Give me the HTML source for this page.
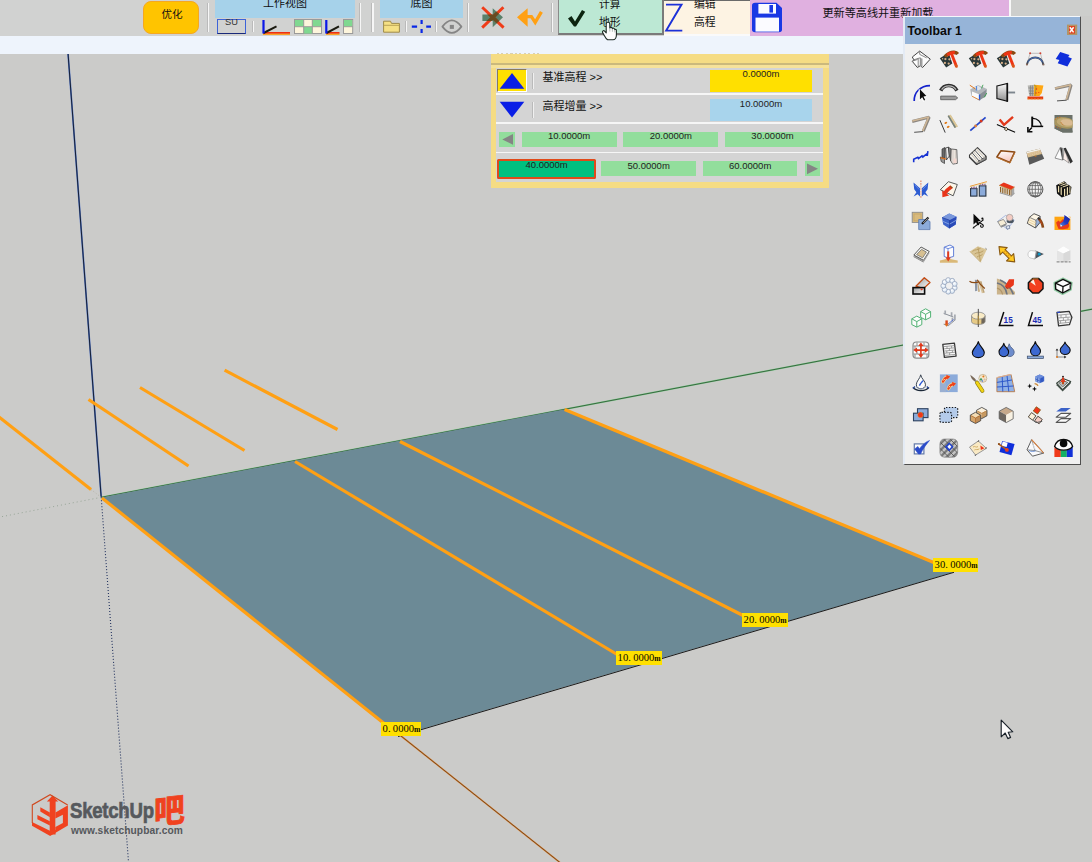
<!DOCTYPE html>
<html><head><meta charset="utf-8">
<style>
html,body{margin:0;padding:0;}
body{width:1092px;height:862px;overflow:hidden;background:#cbcbc9;position:relative;font-family:"Liberation Sans","Noto Sans CJK SC",sans-serif;}
.abs{position:absolute;}
#scene{position:absolute;left:0;top:0;width:1092px;height:862px;}
#topbar{position:absolute;left:0;top:0;width:1092px;height:36px;background:#d1d2d1;overflow:hidden;}
#band{position:absolute;left:0;top:36px;width:1081px;height:18px;background:#eef4fc;}
.sep{position:absolute;width:1.2px;background:#f6f6f6;box-shadow:-1px 0 0 #bababa;}
.hdr{position:absolute;top:0;height:17.5px;background:#a6d2ea;}
.cjk{font-family:"Liberation Sans","Noto Sans CJK SC",sans-serif;color:#111;white-space:nowrap;}
.t11{font-size:11px;line-height:11px;}
.lab{position:absolute;background:#ffe000;font-family:"Liberation Serif","Noto Serif CJK SC",serif;font-size:10.6px;line-height:11px;color:#0c0c00;white-space:nowrap;}
.lab span{position:absolute;left:1.6px;top:0.6px;}.lab i{font-style:normal;letter-spacing:2.3px;}.lab b{font-size:7.6px;letter-spacing:0;}
.fld{position:absolute;font-size:9.5px;line-height:10px;text-align:center;color:#222;}
</style></head><body>
<!-- SCENE -->
<svg id="scene" width="1092" height="862" viewBox="0 0 1092 862">
<line x1="101.2" y1="497.3" x2="1092" y2="309.2" stroke="#86cf92" stroke-width="1.7"/><line x1="101.2" y1="497.3" x2="1092" y2="309.2" stroke="#2a5532" stroke-width="0.85"/>
<polygon points="101.5,497.5 564.3,409.4 954,572 398,736" fill="#6c8a96"/>
<line x1="398" y1="736.5" x2="954" y2="572.3" stroke="#1a1a1a" stroke-width="1"/>

<line x1="68" y1="53" x2="101.2" y2="497.3" stroke="#4f72c6" stroke-width="1.7"/><line x1="68" y1="53" x2="101.2" y2="497.3" stroke="#0e1624" stroke-width="0.9"/>
<line x1="101.2" y1="497.3" x2="128.5" y2="862" stroke="#22325e" stroke-width="1.1" stroke-dasharray="1 2"/>
<line x1="101.2" y1="497.3" x2="0" y2="517" stroke="#98a698" stroke-width="1" stroke-dasharray="1 3"/>
<line x1="91" y1="489.5" x2="101.2" y2="497.3" stroke="#b8b4a8" stroke-width="1" stroke-dasharray="1 2"/>
<line x1="400.4" y1="735.5" x2="559.8" y2="862.4" stroke="#e08a3a" stroke-width="1.6"/><line x1="400.4" y1="735.5" x2="559.8" y2="862.4" stroke="#5e3a1c" stroke-width="0.8"/>
<g stroke="#ffa014" stroke-width="3.2" stroke-linecap="butt">
<line x1="-1" y1="417" x2="91" y2="489.5"/>
<line x1="102" y1="498" x2="386" y2="725"/>
<line x1="88.5" y1="399.5" x2="188.5" y2="466"/>
<line x1="295" y1="461.5" x2="618" y2="655"/>
<line x1="140" y1="387.5" x2="244.5" y2="450.5"/>
<line x1="400" y1="441.5" x2="744" y2="616"/>
<line x1="224.6" y1="370.2" x2="337.5" y2="429.5"/>
<line x1="564.6" y1="409.6" x2="935" y2="563"/>
</g>
</svg>
<div class="lab" style="left:381px;top:722px;width:40px;height:14px;"><span>0<i>.</i>0000<b>m</b></span></div>
<div class="lab" style="left:616px;top:651px;width:46px;height:14px;"><span>10<i>.</i>0000<b>m</b></span></div>
<div class="lab" style="left:742px;top:613px;width:46px;height:14px;"><span>20<i>.</i>0000<b>m</b></span></div>
<div class="lab" style="left:933px;top:558px;width:45px;height:14px;"><span>30<i>.</i>0000<b>m</b></span></div>

<!-- TOP BAR -->
<div id="topbar">
<!-- optimise button -->
<div class="abs" style="left:143.2px;top:1px;width:53.8px;height:31px;border:1.5px solid #f5a820;border-radius:8px;background:#ffc400;"></div>
<div class="abs cjk" style="left:143px;top:7.5px;width:58px;text-align:center;font-size:10.6px;line-height:12px;">优化</div>
<div class="sep" style="left:208px;top:3px;height:29px;"></div>
<!-- work view -->
<div class="hdr" style="left:215px;width:140px;"></div>
<div class="abs cjk" style="left:215px;top:-3px;width:140px;text-align:center;font-size:11px;line-height:13px;">工作视图</div>
<div class="abs" style="left:217px;top:19px;width:27px;height:13px;border:1px solid #3d63d8;border-bottom:1.5px solid #1a2a7a;"></div>
<div class="abs" style="left:217px;top:17.6px;width:29px;text-align:center;font-size:9.3px;line-height:9px;color:#333;">SU</div>
<div class="sep" style="left:253px;top:21px;height:11px;"></div>
<svg class="abs" style="left:258px;top:17px;" width="100" height="19" viewBox="258 17 100 19">
 <rect x="263" y="33.3" width="27" height="1.6" fill="#ffa014"/>
 <rect x="263" y="32" width="27" height="1.6" fill="#f03010"/>
 <line x1="263.5" y1="33" x2="276.5" y2="26.3" stroke="#1a1a10" stroke-width="2"/>
 <rect x="262.4" y="20" width="2.2" height="13.5" fill="#0a18e8"/>
 <g>
  <rect x="294.5" y="19.5" width="27" height="14" fill="#fdf5dc" stroke="#9a9a9a" stroke-width="1"/>
  <rect x="295" y="20" width="8.7" height="6.5" fill="#80d890"/>
  <rect x="312.3" y="20" width="8.7" height="6.5" fill="#80d890"/>
  <rect x="303.7" y="27" width="8.6" height="6.5" fill="#80d890"/>
  <path d="M303.7 19.5V33.5M312.3 19.5V33.5M294.5 26.7H321.5" stroke="#9a9c98" stroke-width="1" fill="none"/>
 </g>
 <rect x="326" y="33.3" width="13.5" height="1.6" fill="#ffa014"/>
 <rect x="326" y="32" width="13.5" height="1.6" fill="#f03010"/>
 <line x1="326.5" y1="33" x2="339" y2="26.3" stroke="#1a1a10" stroke-width="2"/>
 <rect x="325.2" y="20" width="2.2" height="13.5" fill="#0a18e8"/>
 <rect x="343.5" y="19.5" width="9.2" height="14" fill="#fdf5dc" stroke="#9a9a9a" stroke-width="1"/>
 <rect x="344" y="20" width="8.2" height="6.5" fill="#80d890"/>
 <path d="M343.5 26.7H352.7" stroke="#9a9c98" stroke-width="1"/>
</svg>
<div class="sep" style="left:360px;top:3px;height:29px;"></div>
<div class="sep" style="left:372.4px;top:3px;height:29px;"></div>
<!-- base map -->
<div class="hdr" style="left:380px;width:83px;"></div>
<div class="abs cjk" style="left:380px;top:-3px;width:83px;text-align:center;font-size:11px;line-height:13px;">底图</div>
<svg class="abs" style="left:380px;top:17px;" width="86" height="19" viewBox="380 17 86 19">
 <path d="M383.6 21.2H390.5L391.5 23.4H399.4V32.2H383.6Z" fill="#f5e084" stroke="#9e8a48" stroke-width="1"/>
 <path d="M383.6 25.3H399.4" stroke="#b49c50" stroke-width="0.9"/>
 <g stroke="#0a28e6" stroke-width="2.2">
  <path d="M411.8 26.6H417.1M426.2 26.6H431M421.6 20V24.1M421.6 29.1V33.1"/>
 </g>
 <path d="M442.4 26.6C445.5 22.6 449 20.4 451.8 20.4S458.4 22.6 461.4 26.6C458.4 30.6 455 32.8 451.8 32.8S445.5 30.6 442.4 26.6Z" fill="none" stroke="#858585" stroke-width="1.8" stroke-linejoin="round"/>
 <rect x="449.8" y="24.9" width="4.1" height="4" fill="#858585"/>
</svg>
<div class="sep" style="left:406px;top:21px;height:11px;"></div>
<div class="sep" style="left:436px;top:21px;height:11px;"></div>
<div class="sep" style="left:468px;top:3px;height:29px;"></div>
<!-- X icon & arrow icon -->
<svg class="abs" style="left:476px;top:0px;" width="74" height="36" viewBox="476 0 74 36">
 <defs><clipPath id="garr"><path d="M482.4 14.4H492.7V8.2L503 17.3L492.7 27.2V21H482.4Z"/></clipPath></defs>
 <path d="M482.4 14.4H492.7V8.2L503 17.3L492.7 27.2V21H482.4Z" fill="#5a806a"/>
 <path d="M482.2 7.2L503.6 27.6M503.4 7.2L482.2 27.6" stroke="#f03c18" stroke-width="2.9" fill="none"/>
 <g clip-path="url(#garr)"><path d="M482.2 7.2L503.6 27.6M503.4 7.2L482.2 27.6" stroke="#6a4a20" stroke-width="3.6" fill="none"/></g>
 <path d="M517 17.3L527.6 8.2V26.8Z" fill="#ffa014"/>
 <path d="M526 16.6H531.4L535.2 22.4L541.4 11.8" fill="none" stroke="#ffa014" stroke-width="3.3" stroke-linejoin="miter" stroke-miterlimit="2"/>
</svg>
<div class="sep" style="left:552px;top:3px;height:29px;"></div>
<!-- green button -->
<div class="abs" style="left:558px;top:-2px;width:103px;height:35px;background:#bce8d4;border-left:1.5px solid #8a8a8a;border-right:2px solid #7a7a7a;border-bottom:2px solid #7a7a7a;"></div>
<svg class="abs" style="left:565px;top:8px;" width="24" height="22" viewBox="565 8 24 22">
 <path d="M568 18.5L571.5 16L575 21.5L582 10L585.2 11.8L576 26.5H574Z" fill="#0c2410"/>
</svg>
<div class="abs cjk" style="left:599px;top:-2.5px;font-size:10.8px;line-height:13px;">计算</div>
<div class="abs cjk" style="left:599px;top:16px;font-size:10.8px;line-height:13px;">地形</div>
<!-- cream button -->
<div class="abs" style="left:664px;top:0;width:86px;height:36px;background:#fdf3e3;border-top:1.5px solid #6a6a6a;border-bottom:2.2px solid #fafafa;box-sizing:border-box;"></div>
<svg class="abs" style="left:664px;top:2px;" width="22" height="32" viewBox="664 2 22 32">
 <path d="M666 4.6H681.5L666.2 30.6H682.3" fill="none" stroke="#1c30d8" stroke-width="1.9"/>
</svg>
<div class="abs cjk" style="left:694px;top:-2.5px;font-size:10.8px;line-height:13px;">编辑</div>
<div class="abs cjk" style="left:694px;top:16px;font-size:10.8px;line-height:13px;">高程</div>
<!-- pink -->
<div class="abs" style="left:750px;top:0;width:259px;height:36px;background:#e0b0e0;"></div>
<div class="abs" style="left:1009px;top:0;width:83px;height:36px;background:#cdcecc;"></div><div class="abs" style="left:1081px;top:16px;width:11px;height:20px;background:#cbcbc9;"></div><div class="abs" style="left:1009px;top:0;width:1.5px;height:17px;background:#f8f8f8;"></div>
<svg class="abs" style="left:750px;top:0px;" width="36" height="36" viewBox="750 0 36 36">
 <path d="M752 5.6Q752 2.8 755 2.8H776.5L782 8V29.5Q782 32.2 779 32.2H755Q752 32.2 752 29.5Z" fill="#1a38e4"/>
 <rect x="758.4" y="4" width="17.6" height="9.6" fill="#fbfbff"/>
 <rect x="769.4" y="5" width="3.6" height="7.6" fill="#1a38e4"/>
 <rect x="755.5" y="17.6" width="23.5" height="14" fill="#fbfbff"/>
</svg>
<div class="abs cjk" style="left:822.5px;top:7px;font-size:11.1px;line-height:12px;">更新等高线并重新加载</div>
</div>
<div id="band"></div>
<!-- YELLOW PANEL -->
<div class="abs" style="left:491px;top:53.5px;width:338px;height:134px;background:#f5dc84;"></div>
<div class="abs" style="left:491px;top:62.8px;width:338px;height:2.2px;background:#cbb97c;"></div><div class="abs" style="left:491px;top:65px;width:338px;height:2.6px;background:#f6e29a;"></div>
<div class="abs" style="left:496px;top:67.5px;width:327px;height:114.5px;background:#d4d4d4;"></div>
<div class="abs" style="left:496px;top:93.3px;width:327px;height:1.7px;background:#f6f6f6;"></div>
<div class="abs" style="left:496px;top:122px;width:327px;height:1.7px;background:#f6f6f6;"></div>
<div class="abs" style="left:496px;top:151.5px;width:327px;height:1.7px;background:#f6f6f6;"></div>
<div class="abs" style="left:497px;top:53.4px;width:44px;height:1px;background:repeating-linear-gradient(90deg,#cdbf94 0 2px,transparent 2px 4.5px);opacity:0.7;"></div>
<!-- row1 -->
<div class="abs" style="left:497px;top:69px;width:28px;height:21px;background:#ffe000;border-top:1.5px solid #8a7a5a;border-left:1.5px solid #8a7a5a;border-right:1.5px solid #fff;border-bottom:1.5px solid #fff;"></div>
<svg class="abs" style="left:497px;top:69px;" width="31" height="51" viewBox="497 69 31 51">
 <path d="M512 73L524.3 88.8H499.7Z" fill="#0a1ee6"/>
 <path d="M512 117.6L524.3 101.8H499.7Z" fill="#0a1ee6"/>
</svg>
<div class="sep" style="left:533px;top:73px;height:16px;background:#f0f0f0;"></div>
<div class="sep" style="left:533px;top:102px;height:16px;background:#f0f0f0;"></div>
<div class="abs cjk" style="left:542.5px;top:70.7px;font-size:11px;line-height:12px;">基准高程 &gt;&gt;</div>
<div class="abs cjk" style="left:542.5px;top:100.1px;font-size:11px;line-height:12px;">高程增量 &gt;&gt;</div>
<div class="fld" style="left:710px;top:69.7px;width:102px;height:22px;background:#ffe000;"><div style="margin-top:-0.7px">0.0000m</div></div>
<div class="fld" style="left:710px;top:98.7px;width:102px;height:22px;background:#a8d4ec;"><div style="margin-top:0.8px">10.0000m</div></div>
<!-- row3 -->
<div class="fld" style="left:499px;top:131.8px;width:16px;height:15.4px;background:#92de9c;"></div>
<div class="fld" style="left:521.6px;top:131.8px;width:95px;height:15.4px;background:#92de9c;"><div style="margin-top:-0.7px">10.0000m</div></div>
<div class="fld" style="left:623.4px;top:131.8px;width:95px;height:15.4px;background:#92de9c;"><div style="margin-top:-0.7px">20.0000m</div></div>
<div class="fld" style="left:725px;top:131.8px;width:95px;height:15.4px;background:#92de9c;"><div style="margin-top:-0.7px">30.0000m</div></div>
<!-- row4 -->
<div class="fld" style="left:497.4px;top:159px;width:98.4px;height:19.5px;background:#00c080;border:2px solid #e04a1a;box-sizing:border-box;border-radius:1.5px;"><div style="margin-top:-0.6px">40.0000m</div></div>
<div class="fld" style="left:601.2px;top:161.2px;width:95px;height:15.2px;background:#92de9c;"><div style="margin-top:-0.5px">50.0000m</div></div>
<div class="fld" style="left:703.2px;top:161.2px;width:94px;height:15.2px;background:#92de9c;"><div style="margin-top:-0.5px">60.0000m</div></div>
<div class="fld" style="left:804.8px;top:161.2px;width:15px;height:15.2px;background:#92de9c;"></div>
<svg class="abs" style="left:497px;top:130px;" width="326" height="50" viewBox="497 130 326 50">
 <path d="M502.3 139.4L513 134V144.8Z" fill="#858585"/>
 <path d="M818 168.8L807 163.4V174.2Z" fill="#858585"/>
</svg>
<!-- TOOLBAR PANEL -->
<div id="tb1" class="abs" style="left:903px;top:16px;width:178px;height:449px;background:#f0f0f0;box-sizing:border-box;border-left:2px solid #e4ebf5;border-top:1.4px solid #f4f7fb;border-right:1.3px solid #4e4e4e;border-bottom:1.3px solid #4e4e4e;"></div>
<div class="abs" style="left:905px;top:17.4px;width:175px;height:26.4px;background:#96b4d8;"></div>
<div class="abs" style="left:907.5px;top:24px;font-size:12.3px;line-height:14px;font-weight:bold;color:#0a0a0a;white-space:nowrap;letter-spacing:0px;">Toolbar 1</div>
<svg class="abs" style="left:1066px;top:23px;" width="13" height="13" viewBox="0 0 13 13"><rect x="1" y="1.6" width="10.2" height="10.4" fill="#b29466"/><rect x="3" y="3" width="6" height="7.6" fill="#e2401c"/><path d="M3.8 4.2L7.6 9.4M7.6 4.2L3.8 9.4" stroke="#fdfdfd" stroke-width="1.5"/></svg>
<svg class="abs" style="left:908.8px;top:47.0px;" width="24" height="24" viewBox="0 0 24 24"><path d="M10.7 4.1L21.3 12.1L13.6 20.5L11.3 18.7L8.4 20.5L3.3 14.4L4.8 12.8L3.3 10Z" fill="#fdfdfd" stroke="#444" stroke-width="1" stroke-linejoin="round"/>
<path d="M11.3 10.8L12.9 11.5V19.6L11.3 18.7Z" fill="#cfcfcf"/>
<path d="M4.8 12.8L9.2 11.4L11.3 10.8M9.2 11.4V19.8M11.3 10.8V18.7M12.9 11.5V19.6M10.7 4.3V7.4L17.7 10.9M3.6 14.2L8.6 12.4" stroke="#6a6a6a" stroke-width="0.8" fill="none"/></svg>
<svg class="abs" style="left:937.3px;top:47.0px;" width="24" height="24" viewBox="0 0 24 24"><path d="M2.8 11.3L11.7 5.7L15.3 16.4L9.2 20.5Z" fill="#2a3838"/>
<g fill="#d9b08a"><circle cx="8.4" cy="12.1" r="1.15"/><circle cx="12.4" cy="12.3" r="1.15"/><circle cx="7.9" cy="15.9" r="1.1"/><circle cx="11.7" cy="16.6" r="1.1"/><circle cx="10.2" cy="9" r="0.8"/><circle cx="5.6" cy="11.8" r="0.7"/></g>
<path d="M7.8 9.6C10.5 7 14.5 5 17 5.2C18.6 5.4 20 6 20.8 7" fill="none" stroke="#8a4a12" stroke-width="3.4"/>
<path d="M10.2 8C12.5 6.2 15 5.4 17.8 5.8" fill="none" stroke="#ee3514" stroke-width="3.2"/>
<path d="M14.6 7L19.6 19.8" stroke="#ee3514" stroke-width="2.9"/>
<path d="M18.6 17.4L19.9 20.6" stroke="#d8581a" stroke-width="2.2"/></svg>
<svg class="abs" style="left:965.8px;top:47.0px;" width="24" height="24" viewBox="0 0 24 24"><path d="M2.8 11.3L11.7 5.7L15.3 16.4L9.2 20.5Z" fill="#2a3838"/>
<g fill="#d9b08a"><circle cx="8.4" cy="12.1" r="1.15"/><circle cx="12.4" cy="12.3" r="1.15"/><circle cx="7.9" cy="15.9" r="1.1"/><circle cx="11.7" cy="16.6" r="1.1"/><circle cx="10.2" cy="9" r="0.8"/><circle cx="5.6" cy="11.8" r="0.7"/></g>
<path d="M7.8 9.6C10.5 7 14.5 5 17 5.2C18.6 5.4 20 6 20.8 7" fill="none" stroke="#8a4a12" stroke-width="3.4"/>
<path d="M10.2 8C12.5 6.2 15 5.4 17.8 5.8" fill="none" stroke="#ee3514" stroke-width="3.2"/>
<path d="M14.6 7L19.6 19.8" stroke="#ee3514" stroke-width="2.9"/>
<path d="M18.6 17.4L19.9 20.6" stroke="#d8581a" stroke-width="2.2"/></svg>
<svg class="abs" style="left:994.3px;top:47.0px;" width="24" height="24" viewBox="0 0 24 24"><path d="M2.8 11.3L11.7 5.7L15.3 16.4L9.2 20.5Z" fill="#2a3838"/>
<g fill="#d9b08a"><circle cx="8.4" cy="12.1" r="1.15"/><circle cx="12.4" cy="12.3" r="1.15"/><circle cx="7.9" cy="15.9" r="1.1"/><circle cx="11.7" cy="16.6" r="1.1"/><circle cx="10.2" cy="9" r="0.8"/><circle cx="5.6" cy="11.8" r="0.7"/></g>
<path d="M7.8 9.6C10.5 7 14.5 5 17 5.2C18.6 5.4 20 6 20.8 7" fill="none" stroke="#8a4a12" stroke-width="3.4"/>
<path d="M10.2 8C12.5 6.2 15 5.4 17.8 5.8" fill="none" stroke="#ee3514" stroke-width="3.2"/>
<path d="M14.6 7L19.6 19.8" stroke="#ee3514" stroke-width="2.9"/>
<path d="M18.6 17.4L19.9 20.6" stroke="#d8581a" stroke-width="2.2"/></svg>
<svg class="abs" style="left:1022.8px;top:47.0px;" width="24" height="24" viewBox="0 0 24 24"><path d="M3.8 17.5L7.1 6.3H17.4L20.4 17.5" fill="none" stroke="#b9b9b9" stroke-width="0.9"/>
<path d="M3.8 17.8C5.5 8 19 8 20.4 17.8" fill="none" stroke="#39485e" stroke-width="1.9"/>
<path d="M5 15C7.5 9 17 9 19.3 15" fill="none" stroke="#4a78d8" stroke-width="0.7"/>
<circle cx="7.1" cy="6.3" r="1" fill="#d04030"/><circle cx="17.4" cy="6.3" r="1" fill="#d04030"/>
<rect x="3" y="16.6" width="1.8" height="1.8" fill="#8a6a5a"/><rect x="19.5" y="16.6" width="1.8" height="1.8" fill="#8a6a5a"/></svg>
<svg class="abs" style="left:1051.3px;top:47.0px;" width="24" height="24" viewBox="0 0 24 24"><path d="M9.2 5L18.5 7.9L17.2 9.9L20.9 11.5L16.4 19.6L6.7 16.3L8.4 13.1L4.7 11.9Z" fill="#0f2edb"/></svg>
<svg class="abs" style="left:908.8px;top:79.5px;" width="24" height="24" viewBox="0 0 24 24"><path d="M5.2 21C5 12 11.5 5.8 21 5.6" fill="none" stroke="#1422cc" stroke-width="1.7"/>
<path d="M10.2 9.5V20.5L12.6 18.3L14.4 21.3L16 20.4L14.4 17.4L17.3 16.8Z" fill="#fff" stroke="#fff" stroke-width="1"/>
<path d="M10.9 9.2V19.6L13.2 17.2L15 20.6L16.2 20L14.5 16.6L17.4 16Z" fill="#0a0a0a"/></svg>
<svg class="abs" style="left:937.3px;top:79.5px;" width="24" height="24" viewBox="0 0 24 24"><path d="M3.7 10.6C7 3.8 16.5 3.8 19.9 10.6" fill="none" stroke="#2e2e2e" stroke-width="3.6"/>
<path d="M4.6 9.6C8 4.6 15.6 4.6 19 9.6" fill="none" stroke="#b8b8b8" stroke-width="1.2"/>
<path d="M3.7 16.1H18.5L20.7 17.9L18.5 19.7H3.7Z" fill="#9c9c9c" stroke="#555" stroke-width="0.8"/></svg>
<svg class="abs" style="left:965.8px;top:79.5px;" width="24" height="24" viewBox="0 0 24 24"><path d="M4.2 9.5L12 5L21 9L20 16L13 20.5L5.5 16Z" fill="#b4b8bc"/>
<path d="M6 11.5L13.5 14.5V20L6 16.2Z" fill="#fbfbfb"/>
<path d="M13.5 14.5L20.5 9.5L20 16L13.5 20.2Z" fill="#8a9096"/>
<path d="M8 7.5L12 5.5L16 8.5L12 10.5Z" fill="#dfe4ea"/>
<path d="M13.5 14.5V20.3" stroke="#2a58d0" stroke-width="1.3"/>
<path d="M10.5 6V10.5" stroke="#5a8ad8" stroke-width="1.2"/>
<path d="M3.8 5.2L9.5 9" stroke="#e07820" stroke-width="1"/>
<path d="M17 4.8L15.5 8.5M20.8 13L18 17.5" stroke="#3aa050" stroke-width="0.9"/>
<path d="M6 16.2L13.5 20" stroke="#e07820" stroke-width="0.8"/></svg>
<svg class="abs" style="left:994.3px;top:79.5px;" width="24" height="24" viewBox="0 0 24 24"><defs><linearGradient id="g13_24" x1="0" y1="0" x2="0" y2="1"><stop offset="0" stop-color="#fafafa"/><stop offset="1" stop-color="#8e8e8e"/></linearGradient></defs>
<path d="M2.9 6L13.4 3.5V21.3L2.9 18.5Z" fill="url(#g13_24)" stroke="#111" stroke-width="1.1"/>
<path d="M13.3 3.2V21.6" stroke="#111" stroke-width="1.7"/>
<path d="M14 12.5H21.1" stroke="#7d868e" stroke-width="1.9"/></svg>
<svg class="abs" style="left:1022.8px;top:79.5px;" width="24" height="24" viewBox="0 0 24 24"><path d="M4.7 5.5L11.4 4.8L11 16.1H6.2Z" fill="#b6b6b2"/>
<path d="M5.5 8H10.8M5.8 11H10.8M6 13.5H10.8M7.5 5.5V16M9.4 5.5V16" stroke="#7e7e7e" stroke-width="0.7"/>
<path d="M11.2 4.8L20.4 5.6L18.8 13L16.5 16.1H10.8Z" fill="#ffa713"/>
<path d="M11.2 5L13 6.5L12 16" stroke="#b89a28" stroke-width="1.2" fill="none"/>
<circle cx="13.5" cy="9" r="0.7" fill="#e83010"/><circle cx="13" cy="13" r="0.7" fill="#e83010"/><circle cx="15.8" cy="12.5" r="0.6" fill="#e83010"/>
<path d="M4.5 16.5H20.2V19.3H4.5Z" fill="#e23a12"/>
<path d="M4.5 19H20.2" stroke="#ff9a20" stroke-width="0.8" stroke-dasharray="2 1.2"/></svg>
<svg class="abs" style="left:1051.3px;top:79.5px;" width="24" height="24" viewBox="0 0 24 24"><path d="M4 8.6L20.1 5L15.9 19.8" fill="none" stroke="#8b8680" stroke-width="3" stroke-linejoin="bevel"/>
<path d="M4 8.2L19.6 4.8L15.3 19.6" fill="none" stroke="#cdb595" stroke-width="1.5" stroke-linejoin="bevel"/>
<path d="M15.7 20.2L6 20.9" fill="none" stroke="#3d3d3d" stroke-width="0.9"/></svg>
<svg class="abs" style="left:908.8px;top:112.0px;" width="24" height="24" viewBox="0 0 24 24"><path d="M3.2 9.5L20.2 5.1L14.3 19.2" fill="none" stroke="#8b8680" stroke-width="3" stroke-linejoin="bevel"/>
<path d="M3.2 9.1L19.7 4.9L13.7 19" fill="none" stroke="#cdb595" stroke-width="1.5" stroke-linejoin="bevel"/>
<path d="M14.1 19.6L5.2 20.3" fill="none" stroke="#3d3d3d" stroke-width="0.9"/></svg>
<svg class="abs" style="left:937.3px;top:112.0px;" width="24" height="24" viewBox="0 0 24 24"><path d="M2.9 8.1L8.2 20.6" stroke="#222" stroke-width="0.9"/>
<path d="M10.6 3.9L13.6 2.8L20.8 14.4L17.6 15.9Z" fill="#cbb586"/>
<path d="M10.6 3.9L12 3.3L19 15.2L17.6 15.9Z" fill="#74827f"/>
<path d="M12 3.3L13.6 2.8L20.8 14.4L19.4 15Z" fill="#dcc898"/>
<ellipse cx="8.8" cy="10.9" rx="1.5" ry="0.9" fill="#e07a18" transform="rotate(-25 8.8 10.9)"/>
<ellipse cx="11.2" cy="14.9" rx="1.5" ry="0.9" fill="#e07a18" transform="rotate(-25 11.2 14.9)"/></svg>
<svg class="abs" style="left:965.8px;top:112.0px;" width="24" height="24" viewBox="0 0 24 24"><path d="M4.3 18.6L19.6 5.3" stroke="#2446c9" stroke-width="1.7"/>
<circle cx="15.1" cy="9" r="1.5" fill="#d8381c"/><circle cx="9.6" cy="14" r="1.4" fill="#e0803a"/></svg>
<svg class="abs" style="left:994.3px;top:112.0px;" width="24" height="24" viewBox="0 0 24 24"><path d="M2.9 12.5L21.1 20.2" stroke="#0a0a0a" stroke-width="1.1"/>
<path d="M5.6 7.4L10 12.8L19 4.8" fill="none" stroke="#e2391a" stroke-width="2.4" stroke-linejoin="miter"/>
<path d="M12.2 15.3L14 17.1L12.2 18.9L10.4 17.1Z" fill="#f0d8a8" stroke="#111" stroke-width="0.8"/></svg>
<svg class="abs" style="left:1022.8px;top:112.0px;" width="24" height="24" viewBox="0 0 24 24"><path d="M9.2 4.6V14.4" stroke="#0a0a0a" stroke-width="1.9"/>
<path d="M8.3 14.4H20.2" stroke="#0a0a0a" stroke-width="1.5"/>
<path d="M10 6.4C14.6 6.6 18 9.8 18.3 14.2" fill="none" stroke="#0a0a0a" stroke-width="1.15"/>
<path d="M8.9 15.6L5.6 19" stroke="#0a0a0a" stroke-width="1.5"/>
<path d="M4.9 15V19.7H9.4" fill="none" stroke="#0a0a0a" stroke-width="1.6"/></svg>
<svg class="abs" style="left:1051.3px;top:112.0px;" width="24" height="24" viewBox="0 0 24 24"><defs><clipPath id="g25_36c"><path d="M3.5 3.1H21.5V20.6H11.7L3.5 16.5Z"/></clipPath></defs>
<g clip-path="url(#g25_36c)"><rect x="3" y="3" width="19" height="18" fill="#6b7169"/>
<ellipse cx="13.4" cy="10.8" rx="11.5" ry="5.6" fill="#a8955e" transform="rotate(9 13.4 10.8)"/>
<ellipse cx="14.6" cy="10.6" rx="9" ry="4.3" fill="#c1aa74" transform="rotate(9 14.6 10.6)"/>
<ellipse cx="16" cy="10.4" rx="6.2" ry="3.1" fill="#dabb93" transform="rotate(9 16 10.4)"/>
<path d="M4 7.6C6 5.6 8 5 9.6 5.2M4.2 14.4C6 15.4 8 16 10.4 16.6M10 10.4C10.8 12 12 13 13.6 13.6" fill="none" stroke="#c8681e" stroke-width="1" stroke-dasharray="1.1 1.3"/>
<path d="M3 15.4C8 18.6 15 19.6 22 18.6V21H3Z" fill="#6b7169"/></g></svg>
<svg class="abs" style="left:908.8px;top:144.3px;" width="24" height="24" viewBox="0 0 24 24"><path d="M4.7 18.2V15.2L8.8 13.3L9.5 14.6L13 11.9L13.8 13L17.4 10.2L18.4 10.9L18.9 7.2" fill="none" stroke="#1531d2" stroke-width="1.6" stroke-linejoin="miter" stroke-miterlimit="3"/></svg>
<svg class="abs" style="left:937.3px;top:144.3px;" width="24" height="24" viewBox="0 0 24 24"><path d="M5 5L8 3.5V14L5 16Z" fill="#6a6a6a" stroke="#333" stroke-width="0.7"/>
<path d="M8.6 4L11.4 3.2L12.4 12L9.4 16Z" fill="#e9e9e9" stroke="#333" stroke-width="0.8"/>
<path d="M11.4 3.2L14.2 5L13.8 17L12.4 12Z" fill="#8c8c8c" stroke="#333" stroke-width="0.7"/>
<path d="M14.2 5L19.8 5.6L20.3 19.4L15.8 20.1L13.8 17Z" fill="#f2ece6" stroke="#444" stroke-width="0.8"/>
<path d="M16 6V20M18.3 6V19.6" stroke="#c9c1ba" stroke-width="0.9"/>
<path d="M3.3 13L7.5 14.5V19.5L4.2 17.5Z" fill="#9a9a9a" stroke="#333" stroke-width="0.7"/>
<path d="M3.6 13.6L9 15.2" stroke="#d87020" stroke-width="1.2"/>
<path d="M16.5 14.5H19.5V19H16.5Z" fill="#f3d6cf"/></svg>
<svg class="abs" style="left:965.8px;top:144.3px;" width="24" height="24" viewBox="0 0 24 24"><path d="M3.5 11.2L11.5 3.6L20 12.2V15.4L10.6 20.5L3.5 13.4Z" fill="#fafafa" stroke="#3a3a3a" stroke-width="1.1" stroke-linejoin="round"/>
<path d="M6.2 8.8L13.6 17.6M8.8 6.2L16.6 15M3.8 12.6L10.8 19.6" stroke="#444" stroke-width="0.9"/>
<path d="M10.6 20.5L20 15.4V12.2L11.4 17.8Z" fill="#8d8d8d" stroke="#3a3a3a" stroke-width="0.7"/>
<path d="M5 10L12.2 18.6M7.6 7.6L15.2 16.4M10.2 5L18.4 13.6" stroke="#d9d2c4" stroke-width="1.3"/></svg>
<svg class="abs" style="left:994.3px;top:144.3px;" width="24" height="24" viewBox="0 0 24 24"><defs><linearGradient id="g33_44" x1="0" y1="0" x2="0.3" y2="1"><stop offset="0" stop-color="#ffffff"/><stop offset="1" stop-color="#f6c9c0"/></linearGradient></defs>
<path d="M7 6.8L20.7 8L15.8 18.5L2.9 12.9Z" fill="url(#g33_44)" stroke="#8a4812" stroke-width="1.6" stroke-linejoin="round"/>
<path d="M3.4 13.6L15.8 19.1L20.9 8.6" fill="none" stroke="#c27a38" stroke-width="0.8"/></svg>
<svg class="abs" style="left:1022.8px;top:144.3px;" width="24" height="24" viewBox="0 0 24 24"><g transform="translate(0 1.1)"><path d="M3.4 6.8L16.7 3.6L21.2 13.7L6.3 19.7Z" fill="#595959"/>
<path d="M3.4 6.8L16.7 3.6L19 8.8L5 12.4Z" fill="#d6bd8c"/>
<path d="M3.4 6.8L16.7 3.6L17.3 5L3.9 8.2Z" fill="#f4f1ec"/>
<path d="M4.2 9L17.8 5.8M4.6 10.6L18.4 7.2" stroke="#f0c8b8" stroke-width="0.6" stroke-dasharray="1.2 1"/>
<rect x="11.6" y="10.6" width="1.8" height="1" fill="#c8701e"/></g></svg>
<svg class="abs" style="left:1051.3px;top:144.3px;" width="24" height="24" viewBox="0 0 24 24"><path d="M9.2 3.6L4 14.1L11.6 16.1Z" fill="#fcfcfc" stroke="#6a6a6a" stroke-width="0.7"/>
<path d="M9.2 3.6L11.6 16.1L13.2 15.2L10.6 3.4Z" fill="#2f2f2f"/>
<path d="M13.4 4.6L12 14.8L18.2 19.2Z" fill="#f9ebe6" stroke="#6a6a6a" stroke-width="0.6"/>
<path d="M12.6 4.2L14.8 3.8L21.8 17.6L19.4 19.6Z" fill="#303030"/>
<path d="M10.8 3.6L12.6 4.2L12 14.8L11.6 16Z" fill="#8a8a8a"/></svg>
<svg class="abs" style="left:908.8px;top:176.6px;" width="24" height="24" viewBox="0 0 24 24"><path d="M4.5 5.5L11 11.2V19.6L8.6 17.2L4.6 19.4L7.4 15.2L5.2 12.2Z" fill="#2d5cd2"/>
<path d="M19.3 5.5L12.8 11.2V19.6L15.2 17.2L19.2 19.4L16.4 15.2L18.6 12.2Z" fill="#2d5cd2"/>
<path d="M6 8L10.2 12.5M17.8 8L13.6 12.5" stroke="#7a9ae8" stroke-width="0.7"/>
<path d="M11.9 3.5V21" stroke="#e0683a" stroke-width="0.9" stroke-dasharray="1.6 1"/>
<path d="M11.9 9V19" stroke="#f4f4f4" stroke-width="0.9" stroke-dasharray="1 1.6"/></svg>
<svg class="abs" style="left:937.3px;top:176.6px;" width="24" height="24" viewBox="0 0 24 24"><path d="M11.4 4.7L20.3 7.5L16.2 18.8L3.3 12.7Z" fill="#fbf6ea" stroke="#4a4a4a" stroke-width="0.9" stroke-linejoin="round"/>
<path d="M14.5 9.8C12 11.5 9.5 13.5 7.2 16.8" fill="none" stroke="#e8341a" stroke-width="3.6"/>
<path d="M5.2 13.4L5.4 20.2L12.2 18.6Z" fill="#e8341a"/>
<path d="M13.2 9.4L15.6 10.8" stroke="#8a4a12" stroke-width="1.2"/></svg>
<svg class="abs" style="left:965.8px;top:176.6px;" width="24" height="24" viewBox="0 0 24 24"><rect x="4.6" y="11.6" width="6.4" height="7.5" fill="#8cabda" stroke="#26313f" stroke-width="1.1"/>
<rect x="13.3" y="8.8" width="6.6" height="10.3" fill="#8cabda" stroke="#26313f" stroke-width="1.1"/>
<path d="M5.2 10.6H10.6M13.8 7.7H19.4" stroke="#d8b0e0" stroke-width="1.2"/>
<path d="M5.5 9.6V11M8 9.2V11M10.4 9.6V11M14.2 6.6V8.2M16.6 6V8.2M19 6.6V8.2" stroke="#333" stroke-width="0.6"/>
<path d="M3.9 9.4L20.8 4.7" stroke="#e8902a" stroke-width="1"/>
<path d="M3.9 10.1L20.8 5.4" stroke="#f0d8a0" stroke-width="0.6"/></svg>
<svg class="abs" style="left:994.3px;top:176.6px;" width="24" height="24" viewBox="0 0 24 24"><path d="M5.4 9.4L17.4 12.8V18.6L6.6 15.6Z" fill="#e6e0d2"/>
<path d="M6.6 10V15.5M8.8 10.6V16.2M11 11.2V16.8M13.2 11.8V17.4M15.4 12.4V18M17.2 12.8V18.5" stroke="#8a5a1e" stroke-width="1.1"/>
<path d="M17.4 12.8L20.2 10.4V15.6L17.4 18.6Z" fill="#a9a9a9"/>
<path d="M5.8 15.8L17.2 19.2L20.4 16" fill="none" stroke="#9a9a9a" stroke-width="1.1"/>
<path d="M5 8.3L9.8 5.5L20.7 9.9L17 12.9Z" fill="#e8351a"/>
<path d="M5 8.3L17 12.9L20.7 9.9" fill="none" stroke="#b88a38" stroke-width="0.7"/></svg>
<svg class="abs" style="left:1022.8px;top:176.6px;" width="24" height="24" viewBox="0 0 24 24"><circle cx="12.3" cy="12.3" r="7.6" fill="#f5f5f5" stroke="#5a5a5a" stroke-width="1"/>
<path d="M4.8 12.3H19.8M5.6 8.6H19M5.6 16H19M7.6 5.9H17M7.6 18.7H17" stroke="#5e5e5e" stroke-width="0.8"/>
<ellipse cx="12.3" cy="12.3" rx="3.2" ry="7.6" fill="none" stroke="#5e5e5e" stroke-width="0.8"/>
<ellipse cx="12.3" cy="12.3" rx="5.8" ry="7.6" fill="none" stroke="#5e5e5e" stroke-width="0.8"/>
<path d="M12.3 4.7V19.9" stroke="#5e5e5e" stroke-width="0.8"/></svg>
<svg class="abs" style="left:1051.3px;top:176.6px;" width="24" height="24" viewBox="0 0 24 24"><path d="M13.2 4.3L20.5 9.9L19.3 17.2L10.8 20.4L6 16.4L5.2 8.3Z" fill="#121212"/>
<path d="M7 9.3L8.2 8.7V15.8L7 15Z M9.6 10.6L10.8 10V18.2L9.6 17.4Z" fill="#efe0b2"/>
<path d="M13 12L14.2 11.4V19L13 19.4Z M15.8 10.6L17 10V17.6L15.8 18.2Z M18.4 9.6L19.4 9.2V16L18.4 16.6Z" fill="#efe0b2"/>
<path d="M8 7.2L13.4 5.4M9.6 8.6L15.4 6.6M11.6 10L17.4 8" stroke="#efe0b2" stroke-width="1"/>
<path d="M14.8 7.2L16.6 6L17.8 7.6Z" fill="#fff"/></svg>
<svg class="abs" style="left:908.8px;top:209.0px;" width="24" height="24" viewBox="0 0 24 24"><rect x="3.2" y="3.3" width="10.5" height="10.1" fill="#d9ba7c" stroke="#8a8a8a" stroke-width="0.9"/>
<rect x="5" y="5" width="7" height="6.8" fill="none" stroke="#c2a468" stroke-width="0.7"/>
<path d="M9.7 10.5H17L21 12.5V20.6H9.7Z" fill="#8cabda" stroke="#5a7ab0" stroke-width="0.8"/>
<path d="M19.4 8.4L13 15" stroke="#1a1a1a" stroke-width="2.2"/>
<path d="M18.8 9.4L14.2 14" stroke="#e8e8e8" stroke-width="0.7"/></svg>
<svg class="abs" style="left:937.3px;top:209.0px;" width="24" height="24" viewBox="0 0 24 24"><path d="M12.2 4.5L19.5 7.7L18.7 15.4L12.2 19.4L6.2 15.4L5 8.5Z" fill="#3c63c9"/>
<path d="M12.2 4.5L19.5 7.7L12.6 11.2L5 8.5Z" fill="#7a98dc"/>
<path d="M12.6 11.2L19.5 7.7L18.7 15.4L12.2 19.4Z" fill="#2a4bb8"/>
<path d="M5.6 12.2L12.4 15.2L19 11.4" fill="none" stroke="#86a4e4" stroke-width="0.9"/>
<path d="M5 8.5L12.6 11.2V19.2" fill="none" stroke="#1e3a9c" stroke-width="0.7"/></svg>
<svg class="abs" style="left:965.8px;top:209.0px;" width="24" height="24" viewBox="0 0 24 24"><path d="M7.5 4.7V15.4L10 13.2L11.8 16.6L13.4 15.8L11.7 12.6L14.8 12Z" fill="#0a0a0a"/>
<circle cx="16.4" cy="9.6" r="1.1" fill="#0a0a0a"/>
<path d="M7.8 18.4L17.6 10.6" stroke="#0a0a0a" stroke-width="1.1"/>
<path d="M12.6 13.2C14.5 14.5 18.2 15 17.2 17.4C16.4 19.2 13.6 18 15 16" fill="none" stroke="#0a0a0a" stroke-width="1.1"/>
<path d="M7.2 17.6L8.6 19.2L6.6 19.4Z" fill="#0a0a0a"/></svg>
<svg class="abs" style="left:994.3px;top:209.0px;" width="24" height="24" viewBox="0 0 24 24"><path d="M3.5 12.5L11.6 6.4L20.2 11L13.6 20.4Z" fill="none" stroke="#8aa0d8" stroke-width="0.7"/>
<path d="M3.7 12.6L9.4 10.4L12.4 14.6L6.6 17.4Z" fill="#f6edd6" stroke="#7a7a7a" stroke-width="0.8"/>
<path d="M6.6 17.4L12.4 14.6V16.2L7 18.8Z" fill="#8e8e8e"/>
<ellipse cx="16.2" cy="12" rx="3.6" ry="2.2" fill="#4b5560"/>
<circle cx="15.6" cy="8.6" r="3.3" fill="#f3cbc2" stroke="#9a9a9a" stroke-width="0.7"/>
<path d="M12 17.4L15.4 16.4L15.8 19.4L13 20.2Z" fill="#dfe6f2" stroke="#5a6a88" stroke-width="0.7"/></svg>
<svg class="abs" style="left:1022.8px;top:209.0px;" width="24" height="24" viewBox="0 0 24 24"><path d="M6.4 8.3L13 11.3L12.5 19L4.3 14.4Z" fill="#fbf1da"/>
<path d="M13 11.3L17.1 7.2V13.4L12.5 19Z" fill="#9ab2d8"/>
<path d="M6.4 8.3L11 4.7L17.1 7.2L13 11.3Z" fill="#fdf6e6"/>
<path d="M6.4 8.3L11 4.7L17.1 7.2V13.4L12.5 19L4.3 14.4Z" fill="none" stroke="#454545" stroke-width="0.9" stroke-linejoin="round"/>
<path d="M6.4 8.3L13 11.3L17.1 7.2M13 11.3L12.5 19" fill="none" stroke="#555" stroke-width="0.7"/>
<path d="M5.8 10.6L12.8 13.8M5.2 12.6L12.7 16.2" stroke="#e6cf9a" stroke-width="0.9"/>
<path d="M15.4 9.6C17.6 11 19.4 14.4 20 18.6" fill="none" stroke="#8a4816" stroke-width="2.6"/>
<path d="M16.4 10.6C17.6 12 18.4 13.6 18.9 15.4" fill="none" stroke="#c2441c" stroke-width="0.9"/>
<path d="M14.8 8.8L16.8 10.4" stroke="#2e2e2e" stroke-width="1.8"/></svg>
<svg class="abs" style="left:1051.3px;top:209.0px;" width="24" height="24" viewBox="0 0 24 24"><defs><linearGradient id="g55_66" x1="1" y1="0" x2="0" y2="1"><stop offset="0" stop-color="#18229c"/><stop offset="0.55" stop-color="#2438c0"/><stop offset="1" stop-color="#5c94dc"/></linearGradient></defs>
<rect x="3.5" y="7.7" width="15.9" height="13.3" fill="#ffa411"/>
<path d="M5.1 13.4L7.6 11.6L9 13L11.7 10.3L14 11.4L17.9 14.6L18.2 17L16.9 19.6L12 20.2L7.6 20L6.1 16.8Z" fill="#e83a1c"/>
<path d="M13.5 5.7L19.2 9.8L16.9 14.9L11.7 17L9.9 17.7L8.6 14.9L12.2 12.4L13.3 8.3Z" fill="url(#g55_66)"/>
<path d="M9.2 15.6L9.9 17.9L11.2 16.6Z" fill="#f6f8fb"/>
<path d="M14 4.9L19.8 9.2L19.2 10L13.4 5.8Z" fill="#fbfbfb"/></svg>
<svg class="abs" style="left:908.8px;top:241.5px;" width="24" height="24" viewBox="0 0 24 24"><path d="M4.9 13L12.1 5L20.2 9.4L14.5 18.3Z" fill="#f6f6f2" stroke="#4a4a4a" stroke-width="0.9" stroke-linejoin="round"/>
<path d="M7.6 12.6L12.6 7.4L17.4 10L13.6 15.8Z" fill="#d7c091" stroke="#6d6d6d" stroke-width="0.8"/>
<path d="M4.9 13L14.5 18.3V20.4L4.6 15Z" fill="#6e6e6e"/>
<path d="M14.5 18.3L20.2 9.4V11.4L14.5 20.4Z" fill="#9a9a9a"/>
<path d="M5 14.3L14.4 19.4" stroke="#d8d8d8" stroke-width="0.6"/></svg>
<svg class="abs" style="left:937.3px;top:241.5px;" width="24" height="24" viewBox="0 0 24 24"><path d="M2.9 20.7V18.4C6 18.2 8 16.8 11 16.8S17 18.2 20.7 18.4V20.7Z" fill="#dab978"/>
<path d="M7.2 5.2L13 3L16.6 5V14.4L11 16L7.2 14.4Z" fill="#fcfcff" stroke="#5273d4" stroke-width="0.9" stroke-linejoin="round"/>
<path d="M7.2 5.2L11 6.6L16.6 5M11 6.6V16" fill="none" stroke="#5273d4" stroke-width="0.8"/>
<path d="M11.2 9.4V16.4" stroke="#e23a1c" stroke-width="2"/>
<path d="M8.6 15.6H13.8L11.2 19.4Z" fill="#e23a1c"/></svg>
<svg class="abs" style="left:965.8px;top:241.5px;" width="24" height="24" viewBox="0 0 24 24"><path d="M3.9 9.4L11.9 4.2L20.8 7.4L14.7 20.3Z" fill="#d9c596"/>
<path d="M6.4 9.4C9 7 12 8.4 14.6 6.2M8.6 12C11 10 14 11.6 17.4 8.8M11 15C13 13.4 14.6 14.4 16.6 12.2M12 5.4L14.4 19.4" fill="none" stroke="#b89c62" stroke-width="0.9"/>
<path d="M3.9 9.4L14.7 20.3" stroke="#c2aa74" stroke-width="0.8"/>
<path d="M19.4 6.2L20.9 7.4" stroke="#8a8a8a" stroke-width="1"/></svg>
<svg class="abs" style="left:994.3px;top:241.5px;" width="24" height="24" viewBox="0 0 24 24"><path d="M9.2 8.2L17.4 16.4" stroke="#8a5a12" stroke-width="4.6"/>
<path d="M5 4.6L13.2 5.6L6 12.8Z" fill="#ffc922" stroke="#8a5a12" stroke-width="1.1" stroke-linejoin="round"/>
<path d="M20.7 19.9L12.5 18.9L19.7 11.7Z" fill="#ffc922" stroke="#8a5a12" stroke-width="1.1" stroke-linejoin="round"/>
<path d="M8.6 7.6L17.6 16.6" stroke="#ffc922" stroke-width="2.6"/>
<path d="M10 9L16.4 15.4" stroke="#e8a018" stroke-width="2.4" stroke-dasharray="1.4 1.4"/></svg>
<svg class="abs" style="left:1022.8px;top:241.5px;" width="24" height="24" viewBox="0 0 24 24"><path d="M12.4 8.6L20.8 11.9L10.8 17.6Z" fill="#4a545e"/>
<path d="M8.4 8.6L13.4 9.2L12 16.9L8 16.2C3.6 15.4 4.2 8.4 8.4 8.6Z" fill="#fdfdfd" stroke="#b9b9b9" stroke-width="0.7"/>
<path d="M12 16.9L13.4 9.2" stroke="#8a8a8a" stroke-width="0.7"/>
<circle cx="16.2" cy="12.2" r="1.4" fill="#0f95c4"/></svg>
<svg class="abs" style="left:1051.3px;top:241.5px;" width="24" height="24" viewBox="0 0 24 24"><path d="M12.4 4.2L19.3 8.2V17.9L12.4 19.9L6 17.9V8.2Z" fill="#e4e4e4"/>
<path d="M12.4 4.2L19.3 8.2L12.4 11.6L6 8.2Z" fill="#fdfdfd"/>
<path d="M12.4 11.6L19.3 8.2V17.9L12.4 19.9Z" fill="#d9d9d9"/>
<path d="M5.6 19.9H19.6" stroke="#6a6a6a" stroke-width="0.9" stroke-dasharray="3 1"/></svg>
<svg class="abs" style="left:908.8px;top:273.8px;" width="24" height="24" viewBox="0 0 24 24"><defs><linearGradient id="g70_81" x1="0" y1="0" x2="1" y2="1"><stop offset="0" stop-color="#9a9a9a"/><stop offset="1" stop-color="#ffffff"/></linearGradient></defs>
<path d="M6.9 12.2L15.3 3.7L21 8.5L14.5 14.6Z" fill="url(#g70_81)" stroke="#c44a12" stroke-width="1.3" stroke-linejoin="round"/>
<rect x="4" y="13.6" width="11.6" height="6.4" fill="url(#g70_81)" stroke="#0a0a0a" stroke-width="1.6"/>
<path d="M11 14.8H14.4L12.6 16.4Z" fill="#e23a1c"/></svg>
<svg class="abs" style="left:937.3px;top:273.8px;" width="24" height="24" viewBox="0 0 24 24"><defs><radialGradient id="g71_82" cx="0.4" cy="0.35" r="0.7"><stop offset="0" stop-color="#ffffff"/><stop offset="1" stop-color="#cfe0f2"/></radialGradient></defs><circle cx="17.7" cy="13.9" r="2.45" fill="url(#g71_82)" stroke="#8d9bb4" stroke-width="0.7"/><circle cx="15.1" cy="17.0" r="2.45" fill="url(#g71_82)" stroke="#8d9bb4" stroke-width="0.7"/><circle cx="11.2" cy="17.7" r="2.45" fill="url(#g71_82)" stroke="#8d9bb4" stroke-width="0.7"/><circle cx="7.7" cy="15.7" r="2.45" fill="url(#g71_82)" stroke="#8d9bb4" stroke-width="0.7"/><circle cx="6.3" cy="11.9" r="2.45" fill="url(#g71_82)" stroke="#8d9bb4" stroke-width="0.7"/><circle cx="7.7" cy="8.1" r="2.45" fill="url(#g71_82)" stroke="#8d9bb4" stroke-width="0.7"/><circle cx="11.2" cy="6.1" r="2.45" fill="url(#g71_82)" stroke="#8d9bb4" stroke-width="0.7"/><circle cx="15.2" cy="6.8" r="2.45" fill="url(#g71_82)" stroke="#8d9bb4" stroke-width="0.7"/><circle cx="17.7" cy="9.9" r="2.45" fill="url(#g71_82)" stroke="#8d9bb4" stroke-width="0.7"/></svg>
<svg class="abs" style="left:965.8px;top:273.8px;" width="24" height="24" viewBox="0 0 24 24"><path d="M8.9 5.7L11.5 5.9L11.3 16.8L9.1 17.2Z" fill="#8c96a6"/>
<path d="M11.8 6.2L15.4 7.2L18.6 18.4L15.9 19.2Z" fill="#d8c29a"/>
<path d="M12 7L14 17.6L12.2 18L11.4 8Z" fill="#c4ab80"/>
<path d="M15.4 7.2L18.6 18.4L17.4 18.8L14.2 8Z" fill="#b9a07a"/>
<path d="M3.5 7.2C6 9.2 9 8.8 12.6 8.2" fill="none" stroke="#8a4a14" stroke-width="1.3"/>
<path d="M11.2 5.8C13 9 15.4 12 18.8 14.6" fill="none" stroke="#8a4a14" stroke-width="1.2"/></svg>
<svg class="abs" style="left:994.3px;top:273.8px;" width="24" height="24" viewBox="0 0 24 24"><path d="M2.9 4.5L9 6.5L21 18V20.6H2.9Z" fill="#cbb48c"/>
<path d="M3 9C8 10 12 14 13 20.5M6 6C12 8.5 17 14 19.4 20.4" fill="none" stroke="#6e7480" stroke-width="1.6"/>
<path d="M3 14C6 15 8 17.5 8.6 20.5" fill="none" stroke="#b09468" stroke-width="1.2"/>
<path d="M15 5.3H20.1L19.8 11L16 13.9L10.8 12.4Z" fill="#e8361a"/>
<path d="M10.8 12.4L16 13.9L13 15Z" fill="#b82a14"/></svg>
<svg class="abs" style="left:1022.8px;top:273.8px;" width="24" height="24" viewBox="0 0 24 24"><path d="M9.7 4.6H15.7L20 8.8V14.8L15.7 19H9.7L5.4 14.8V8.8Z" fill="#f2401f" stroke="#141414" stroke-width="1.5" stroke-linejoin="round"/>
<path d="M12.7 11.8L7.4 8L10.6 5.4Z" fill="#fbf3e6"/>
<path d="M7.6 6.6L10 4.8H15.4" fill="none" stroke="#b0702a" stroke-width="1"/></svg>
<svg class="abs" style="left:1051.3px;top:273.8px;" width="24" height="24" viewBox="0 0 24 24"><path d="M12 4.2L20.9 8.6L20 15.8L11.6 20.2L3.6 15.8L3.2 8.6Z" fill="none" stroke="#8fc9a2" stroke-width="1.6" stroke-linejoin="round"/>
<path d="M12 5.3L19.8 9.2L19 15.2L11.7 19L4.7 15.2L4.4 9.2Z" fill="#fdfdfd" stroke="#0c0c0c" stroke-width="1.4" stroke-linejoin="round"/>
<path d="M4.4 9.2L12 12.6L19.8 9.2M12 12.6L11.7 19" fill="none" stroke="#0c0c0c" stroke-width="1.3"/>
<path d="M19 10L18.4 15.2" stroke="#9a9a9a" stroke-width="1.2"/></svg>
<svg class="abs" style="left:908.8px;top:306.0px;" width="24" height="24" viewBox="0 0 24 24"><path d="M7.8 10.1L12.8 12.8L12.8 18.6L7.8 21.1L2.8 18.6L2.8 12.8Z" fill="#fcfcfc" stroke="#52b274" stroke-width="1" stroke-linejoin="round"/><path d="M2.8 12.8L7.8 15.6L12.8 12.8M7.8 15.6V21.1" fill="none" stroke="#52b274" stroke-width="1"/><path d="M16.6 2.8L21.6 5.6L21.6 11.3L16.6 13.8L11.7 11.3L11.7 5.6Z" fill="#fcfcfc" stroke="#52b274" stroke-width="1" stroke-linejoin="round"/><path d="M11.7 5.6L16.6 8.3L21.6 5.6M16.6 8.3V13.8" fill="none" stroke="#52b274" stroke-width="1"/></svg>
<svg class="abs" style="left:937.3px;top:306.0px;" width="24" height="24" viewBox="0 0 24 24"><path d="M6.6 7.3L16.4 11" stroke="#8a8f98" stroke-width="1"/>
<path d="M8.2 4.4V8.6M14.6 6.2V10.2M17.9 8.6V14.2M15.4 11.8V15.6" stroke="#a5a9b0" stroke-width="1.7"/>
<path d="M17.9 14.1L11.2 19.8" stroke="#8a8f98" stroke-width="1"/>
<path d="M16.6 13.4L10.6 18.6" stroke="#3a5ad0" stroke-width="0.8"/>
<path d="M6.6 18.2L11.2 19.8" stroke="#8a8f98" stroke-width="0.9"/>
<rect x="8.4" y="14.4" width="2.4" height="4" fill="#d8481c"/>
<path d="M7.4 17.8H11.8L9.6 20.8Z" fill="#e06a1c"/></svg>
<svg class="abs" style="left:965.8px;top:306.0px;" width="24" height="24" viewBox="0 0 24 24"><path d="M5.5 9.7V15.6C5.5 19.4 19.1 19.4 19.1 15.6V9.7Z" fill="#e6ca86"/>
<path d="M15.4 12.4V18.2C17.6 17.6 19.1 16.8 19.1 15.6V9.7Z" fill="#6e665a"/>
<path d="M5.5 9.7V15.6C5.5 19.4 19.1 19.4 19.1 15.6V9.7" fill="none" stroke="#8a8a8a" stroke-width="0.8"/>
<ellipse cx="12.3" cy="9.7" rx="6.8" ry="3.5" fill="#f9ebc6" stroke="#8a8a8a" stroke-width="0.8"/>
<path d="M12.3 2.9V21" stroke="#4a4a4a" stroke-width="1"/>
<path d="M12.3 9.7V18.4" stroke="#b08a3a" stroke-width="1"/></svg>
<svg class="abs" style="left:994.3px;top:306.0px;" width="24" height="24" viewBox="0 0 24 24"><path d="M9.8 6.1L5.4 19.4H19.5" fill="none" stroke="#0c0c0c" stroke-width="1.5" stroke-linejoin="miter"/>
<text x="9.6" y="17.2" font-family="Liberation Sans, sans-serif" font-weight="bold" font-size="8.2" fill="#1a2cb4">15</text></svg>
<svg class="abs" style="left:1022.8px;top:306.0px;" width="24" height="24" viewBox="0 0 24 24"><path d="M9.5 6.1L5.5 19.4H20" fill="none" stroke="#0c0c0c" stroke-width="1.5" stroke-linejoin="miter"/>
<text x="9.4" y="17.2" font-family="Liberation Sans, sans-serif" font-weight="bold" font-size="8.2" fill="#1a2cb4">45</text></svg>
<svg class="abs" style="left:1051.3px;top:306.0px;" width="24" height="24" viewBox="0 0 24 24"><path d="M6 6.5L18.1 5.3L20.9 11.3L18.5 18.6L7.6 19.8Z" fill="#f7f7f7" stroke="#333" stroke-width="1.3" stroke-linejoin="round"/>
<path d="M6.6 9.2L19 8M7 12L20 11M7.2 14.8L19.6 13.8M7.4 17.4L18.6 16.4M10 9V12M15 8.6V11.4M12.4 12V14.6M17 11.4V14M9.6 14.8V17.4M14.6 14.4V16.8" stroke="#8f8f8f" stroke-width="0.8"/>
<path d="M6 6.5L9 6.2" stroke="#2a4ad0" stroke-width="1.2"/></svg>
<svg class="abs" style="left:908.8px;top:338.3px;" width="24" height="24" viewBox="0 0 24 24"><rect x="4" y="4" width="15.8" height="16.1" rx="3.4" fill="#fafafa" stroke="#8a8a8a" stroke-width="1.2"/>
<path d="M4.4 8H19.4M4.4 12H19.4M4.4 16H19.4M8 4.4V8M15 4.4V8M6 8V12M12 8V12M18 8V12M8 12V16M15 12V16M6 16V20M12 16V20M18 16V20" stroke="#8e8e8e" stroke-width="1"/>
<rect x="8.8" y="10.6" width="6.2" height="3" fill="#fafafa"/><path d="M11.9 4.4L14.6 8H9.2Z M11.9 19.8L14.6 16.2H9.2Z M4.4 12.1L8 9.4V14.8Z M19.6 12.1L16 9.4V14.8Z" fill="#e2381a"/>
<path d="M11.9 7V17M7 12.1H17" stroke="#e2381a" stroke-width="1.6"/></svg>
<svg class="abs" style="left:937.3px;top:338.3px;" width="24" height="24" viewBox="0 0 24 24"><path d="M5.8 6.4L17.4 5.2L19.1 18.1L7.4 19.3Z" fill="#fafafa" stroke="#383838" stroke-width="1.3" stroke-linejoin="round"/>
<path d="M7 8.6L17.4 7.6M7.2 10.8L17.8 9.8M7.6 13L18 12M7.8 15.2L18.2 14.2M8 17.4L18.6 16.4M10 8.4V10.6M14.6 8V10M12.4 10.4V12.6M9.8 13V15M15.4 12.4V14.4M12.6 14.8V17" stroke="#8c8c8c" stroke-width="0.8"/></svg>
<svg class="abs" style="left:965.8px;top:338.3px;" width="24" height="24" viewBox="0 0 24 24"><path d="M12.3 3.6C11.7 7.6 6.3 10.9 6.3 14.5C6.3 21.3 18.3 21.3 18.3 14.5C18.3 10.9 12.9 7.6 12.3 3.6Z" fill="#3d69d1" stroke="#0c0c0c" stroke-width="1.1" stroke-linejoin="round"/></svg>
<svg class="abs" style="left:994.3px;top:338.3px;" width="24" height="24" viewBox="0 0 24 24"><path d="M15.2 5.8C14.6 9.8 11.4 10.4 11.4 14.0C11.4 20.1 20.2 20.1 20.2 14.0C20.2 10.4 15.8 9.8 15.2 5.8Z" fill="#6d8ccc" stroke="#56688c" stroke-width="0.9" stroke-linejoin="round"/><path d="M9.8 5.4C9.2 9.4 5.0 10.2 5.0 13.8C5.0 20.3 14.6 20.3 14.6 13.8C14.6 10.2 10.4 9.4 9.8 5.4Z" fill="#3d69d1" stroke="#0c0c0c" stroke-width="1.1" stroke-linejoin="round"/></svg>
<svg class="abs" style="left:1022.8px;top:338.3px;" width="24" height="24" viewBox="0 0 24 24"><path d="M12.3 3.6C11.7 7.6 7.5 9.4 7.5 13.0C7.5 19.3 17.5 19.3 17.5 13.0C17.5 9.4 12.9 7.6 12.3 3.6Z" fill="#3d69d1" stroke="#0c0c0c" stroke-width="1.1" stroke-linejoin="round"/><rect x="4.3" y="18.1" width="16.1" height="2.4" fill="#8cabda" stroke="#3a4a68" stroke-width="0.7"/></svg>
<svg class="abs" style="left:1051.3px;top:338.3px;" width="24" height="24" viewBox="0 0 24 24"><path d="M14.0 4.0C13.4 8.0 9.2 8.4 9.2 12.0C9.2 17.9 19.2 17.9 19.2 12.0C19.2 8.4 14.6 8.0 14.0 4.0Z" fill="#3d69d1" stroke="#0c0c0c" stroke-width="1.1" stroke-linejoin="round"/><path d="M6 19V11.4M6 19H14.6" stroke="#7a7a7a" stroke-width="0.9"/>
<path d="M6 10.4L7.4 12.6H4.6Z M15.4 19L13.2 17.6V20.4Z" fill="#2a2a2a"/>
<circle cx="6" cy="19" r="1" fill="#e07a1c"/></svg>
<svg class="abs" style="left:908.8px;top:370.7px;" width="24" height="24" viewBox="0 0 24 24"><path d="M11.7 3.8C11.2 7.6 7.3 10 7.3 13.8C7.3 19 16.5 19 16.5 13.8C16.5 10 12.2 7.6 11.7 3.8Z" fill="#fcfcfc" stroke="#3a4452" stroke-width="1"/>
<path d="M14 9.6C13 11 11.8 12 10.4 14.6" fill="none" stroke="#2a58d4" stroke-width="1.5"/>
<path d="M4 16.4C7 20.4 16.6 20.8 19.8 16.4" fill="none" stroke="#1b2838" stroke-width="1.5"/>
<path d="M4 17.4L6 15.6M19.8 17.4L17.8 15.6" stroke="#2a4a9a" stroke-width="1.3"/>
<path d="M7 16C9.6 18.2 14 18.2 16.8 16" fill="none" stroke="#8a9ab4" stroke-width="0.7"/></svg>
<svg class="abs" style="left:937.3px;top:370.7px;" width="24" height="24" viewBox="0 0 24 24"><rect x="2.9" y="3.4" width="17.8" height="17.7" fill="#8cabda"/>
<path d="M2.9 12H9V21.1H2.9Z" fill="#a3b3cc" opacity="0.6"/>
<path d="M6 10.6C7 8 8.6 6.6 10.6 6" fill="none" stroke="#f6d890" stroke-width="3.6" stroke-linecap="round"/>
<path d="M6 10.6C7 8 8.6 6.6 10.6 6" fill="none" stroke="#ee3f17" stroke-width="2.2" stroke-linecap="round"/>
<path d="M9.2 3.8L13.2 5.4L10.4 8.6Z" fill="#ee3f17"/>
<path d="M11.4 17.6C12.4 15 14 13.6 16.4 13" fill="none" stroke="#f6d890" stroke-width="3.6" stroke-linecap="round"/>
<path d="M11.4 17.6C12.4 15 14 13.6 16.4 13" fill="none" stroke="#ee3f17" stroke-width="2.2" stroke-linecap="round"/>
<path d="M15 10.8L19 12.4L16.2 15.6Z" fill="#ee3f17"/>
<path d="M6.6 9.4L7.6 8M12 16.4L13 15" stroke="#fff4d0" stroke-width="0.9"/></svg>
<svg class="abs" style="left:965.8px;top:370.7px;" width="24" height="24" viewBox="0 0 24 24"><circle cx="16.8" cy="7.4" r="4" fill="#f4e6cc" stroke="#b9a684" stroke-width="0.7"/>
<circle cx="15" cy="8.4" r="1.2" fill="#3a9a6a"/><circle cx="17.4" cy="5.4" r="1" fill="#e07a1c"/><circle cx="18.6" cy="8.6" r="1" fill="#d8b8a8"/><circle cx="16.4" cy="10" r="0.8" fill="#3a6ad0"/>
<path d="M4.3 3.8C4.6 6.8 6.6 9 8.9 10.4L10.2 9.2C8.6 7 6.4 5.4 4.3 3.8Z" fill="#7a6a5a"/>
<path d="M9.6 9.8L11.2 11.8" stroke="#9a9a9a" stroke-width="2"/>
<path d="M11 11.6L16.4 19.8" stroke="#8a7a14" stroke-width="4" stroke-linecap="round"/>
<path d="M11 11.6L16.4 19.8" stroke="#f1d313" stroke-width="2.8" stroke-linecap="round"/></svg>
<svg class="abs" style="left:994.3px;top:370.7px;" width="24" height="24" viewBox="0 0 24 24"><path d="M2.9 6.6L17 3.4L20.7 20.7H2.9Z" fill="#8fb0e6" stroke="#b87a48" stroke-width="0.9" stroke-linejoin="round"/>
<path d="M2.9 11.4L18 9M2.9 16L19.6 15M8.2 5.4L8.8 20.6M13 4.4L14.8 20.6" stroke="#2a55c8" stroke-width="0.95"/>
<path d="M2.9 6.6L17 3.4" stroke="#e8b898" stroke-width="0.9"/></svg>
<svg class="abs" style="left:1022.8px;top:370.7px;" width="24" height="24" viewBox="0 0 24 24"><path d="M16.7 3.4L21.2 5.6V10.2L16.7 12.2L12.3 10.2V5.6Z" fill="#3c63c9"/>
<path d="M16.7 3.4L21.2 5.6L16.7 7.8L12.3 5.6Z" fill="#6e8fdc"/>
<path d="M12.3 5.6L16.7 7.8V12.2L12.3 10.2Z" fill="#88a8e2"/>
<path d="M14.4 6.8V11.2M12.3 7.9L16.7 10M19 6.8V11.2" stroke="#2444b0" stroke-width="0.6"/>
<path d="M6.7 12.6L7.4 14.4L9.2 15.1L7.4 15.8L6.7 17.6L6 15.8L4.2 15.1L6 14.4Z M11.5 15.4L12.2 17.2L14 17.9L12.2 18.6L11.5 20.4L10.8 18.6L9 17.9L10.8 17.2Z" fill="#0c0c0c"/>
<path d="M11.6 12.6C13 12.6 14.4 13.4 15 14.8" fill="none" stroke="#c8822a" stroke-width="1.4"/></svg>
<svg class="abs" style="left:1051.3px;top:370.7px;" width="24" height="24" viewBox="0 0 24 24"><path d="M12 7.4L19.7 10.6V12.6L11.6 20.4L5.6 14.2V12.2Z" fill="#46524a"/>
<path d="M12 7.4L19.7 10.6L11.6 18.7L5.6 12.2Z" fill="#fbfbfb" stroke="#3a463e" stroke-width="1.1" stroke-linejoin="round"/>
<path d="M12 9.6L16.8 11.4L11.6 16L7.8 12.2Z" fill="#b9b9b9" stroke="#4e5a52" stroke-width="0.8"/>
<path d="M12 5.2L14.4 11H9.6Z" fill="#e23a1c"/>
<path d="M11 11H13V13.2H11Z" fill="#b8501c"/>
<circle cx="12" cy="5.6" r="0.9" fill="#141414"/></svg>
<svg class="abs" style="left:908.8px;top:403.0px;" width="24" height="24" viewBox="0 0 24 24"><rect x="8.5" y="5.7" width="10.5" height="8.9" fill="#8cabda" stroke="#2c415e" stroke-width="1.1"/>
<rect x="4.5" y="10.2" width="9.6" height="7.6" fill="#8cabda" stroke="#2c415e" stroke-width="1.1"/>
<circle cx="11.4" cy="11.9" r="2.6" fill="#f0351a" stroke="#e88a2a" stroke-width="0.9" stroke-dasharray="1 0.8"/></svg>
<svg class="abs" style="left:937.3px;top:403.0px;" width="24" height="24" viewBox="0 0 24 24"><rect x="7.4" y="4.5" width="13.3" height="10.1" rx="1.6" fill="#b4cbea" stroke="#15181c" stroke-width="1.2" stroke-dasharray="1.4 1.5"/>
<rect x="2.9" y="9.3" width="11.7" height="10.1" rx="1.6" fill="#b4cbea" stroke="#15181c" stroke-width="1.2" stroke-dasharray="1.4 1.5"/></svg>
<svg class="abs" style="left:965.8px;top:403.0px;" width="24" height="24" viewBox="0 0 24 24"><path d="M15.8 4.4L21.0 7.2L15.8 10.0L10.6 7.2Z" fill="#faf0dc"/><path d="M10.6 7.2L15.8 10.0L15.8 15.6L10.6 12.8Z" fill="#d9b07a"/><path d="M15.8 10.0L21.0 7.2L21.0 12.8L15.8 15.6Z" fill="#c79a62"/><path d="M15.8 4.4L21.0 7.2L21.0 12.8L15.8 15.6L10.6 12.8L10.6 7.2Z" fill="none" stroke="#3c3c3c" stroke-width="0.8" stroke-linejoin="round"/><path d="M12 8.4L15.8 10.4L19.6 8.4" fill="none" stroke="#b87a3a" stroke-width="0.7"/><path d="M9.5 9.3L14.7 12.1L9.5 14.9L4.3 12.1Z" fill="#f3dcb4"/><path d="M4.3 12.1L9.5 14.9L9.5 20.5L4.3 17.7Z" fill="#d6a66c"/><path d="M9.5 14.9L14.7 12.1L14.7 17.7L9.5 20.5Z" fill="#c08e58"/><path d="M9.5 9.3L14.7 12.1L14.7 17.7L9.5 20.5L4.3 17.7L4.3 12.1Z" fill="none" stroke="#3c3c3c" stroke-width="0.8" stroke-linejoin="round"/><path d="M5 12.6L9.5 15L14 12.6M9.5 15V20" fill="none" stroke="#b06a2a" stroke-width="0.8"/></svg>
<svg class="abs" style="left:994.3px;top:403.0px;" width="24" height="24" viewBox="0 0 24 24"><path d="M12.2 4.4L19.2 8.2L12.2 12.0L5.2 8.2Z" fill="#c7a98a"/><path d="M5.2 8.2L12.2 12.0L12.2 19.6L5.2 15.8Z" fill="#70685f"/><path d="M12.2 12.0L19.2 8.2L19.2 15.8L12.2 19.6Z" fill="#f8f1e2"/><path d="M12.2 4.4L19.2 8.2L19.2 15.8L12.2 19.6L5.2 15.8L5.2 8.2Z" fill="none" stroke="#5a5a5a" stroke-width="0.8" stroke-linejoin="round"/></svg>
<svg class="abs" style="left:1022.8px;top:403.0px;" width="24" height="24" viewBox="0 0 24 24"><path d="M8.5 9.6L12.9 12.8L9.7 17.2L5.3 14.0Z" fill="#fbf1dc" stroke="#4a4034" stroke-width="0.9" stroke-linejoin="round"/><path d="M14.9 13.2L19.3 16.4L16.1 20.8L11.7 17.6Z" fill="#f3cdc4" stroke="#4a4034" stroke-width="0.9" stroke-linejoin="round"/><path d="M13.3 3.8L17.5 6.8L14.5 11.0L10.3 8.0Z" fill="#f2361a" stroke="#8a5a1a" stroke-width="0.9" stroke-linejoin="round"/><path d="M9.6 17L13 19.6L19.2 18.4" fill="none" stroke="#5a5a5a" stroke-width="1"/></svg>
<svg class="abs" style="left:1051.3px;top:403.0px;" width="24" height="24" viewBox="0 0 24 24"><path d="M5.2 8.5L10 4.9H19.7L14.8 8.5Z" fill="#3b62c8"/>
<path d="M5.2 14.2L10 10.4H19.7L14.8 14.2Z" fill="#fbfbfb" stroke="#555" stroke-width="1.1" stroke-linejoin="round"/>
<path d="M5.2 19.4L10 15.6H19.7L14.8 19.4Z" fill="#fbfbfb" stroke="#555" stroke-width="1.1" stroke-linejoin="round"/></svg>
<svg class="abs" style="left:908.8px;top:435.5px;" width="24" height="24" viewBox="0 0 24 24"><rect x="5.3" y="7.9" width="9.6" height="10" fill="#fcfcfc" stroke="#6379a8" stroke-width="1.2"/>
<path d="M5.6 13L8.8 10.4L10.6 12.8C12.8 9 16 6 20.6 4.4C17 8.6 14 12.8 11.6 18H9.4Z" fill="#2a4bc9" stroke="#2a4bc9" stroke-width="0.5" stroke-linejoin="round"/></svg>
<svg class="abs" style="left:937.3px;top:435.5px;" width="24" height="24" viewBox="0 0 24 24"><defs><clipPath id="g121_132c"><path d="M7.4 3H16.2Q20.7 3.6 20.7 8V16.2Q20.2 21.2 16.2 21.2H7.4Q2.9 20.6 2.9 16.2V8Q3.4 3 7.4 3Z"/></clipPath></defs>
<g clip-path="url(#g121_132c)"><rect x="2" y="2" width="20" height="20" fill="#7c7c7c"/>
<path d="M-2 10L10 -2M-2 16.4L16.4 -2M-1 22L22 -1M5.4 22L22 5.4M11.8 22L22 11.8M18 22L22 18" stroke="#c4c4c4" stroke-width="2.3"/>
<path d="M2 5L19 22M2 11.4L12.6 22M2 17.8L6.2 22M5.6 2L22 18.4M12 2L22 12M18.4 2L22 5.6" stroke="#4c4c4c" stroke-width="0.8"/></g>
<path d="M7.4 3H16.2Q20.7 3.6 20.7 8V16.2Q20.2 21.2 16.2 21.2H7.4Q2.9 20.6 2.9 16.2V8Q3.4 3 7.4 3Z" fill="none" stroke="#8e8e8e" stroke-width="0.7"/>
<path d="M12.2 6.2L16.6 10.8L12.2 15.4L7.8 10.8Z" fill="#2142c9"/>
<path d="M12.4 8.6L14.4 10.8L12.4 13L10.4 10.8Z" fill="#fbfbfb"/></svg>
<svg class="abs" style="left:965.8px;top:435.5px;" width="24" height="24" viewBox="0 0 24 24"><path d="M12.3 5L20.4 12.3L9.5 19.1L3.5 11.1Z" fill="#f9e9c4" stroke="#8d8d8d" stroke-width="0.9" stroke-linejoin="round"/>
<path d="M7 11C9 9.6 10 12 12 10.6M8.4 14C10 12.8 11.4 14.4 13.4 12.8" fill="none" stroke="#d1b06a" stroke-width="1"/>
<path d="M14.4 9.4L18.4 12.3L14.8 14Z" fill="#f0351a"/>
<path d="M12.8 4.2L12 6M9 20L10 18.4M20.9 11.6L19.4 12.6" stroke="#555" stroke-width="0.9"/></svg>
<svg class="abs" style="left:994.3px;top:435.5px;" width="24" height="24" viewBox="0 0 24 24"><path d="M8.2 5.1L20.6 7.9L17.4 19.3L5.5 16.1Z" fill="#0f2edb"/>
<path d="M8.7 5.5L13.7 6.7L12.6 11L7.6 9.8Z" fill="#fbfbfb"/>
<path d="M4.6 7.9L12.8 13.8" stroke="#b05a1c" stroke-width="1.6"/>
<circle cx="12.9" cy="13.9" r="1.9" fill="#e8401c"/>
<circle cx="4.9" cy="8" r="1" fill="#8a4a14"/></svg>
<svg class="abs" style="left:1022.8px;top:435.5px;" width="24" height="24" viewBox="0 0 24 24"><path d="M8.6 3.7L20.9 17L9.5 20.2L4 13.8Z" fill="#f9f9fb" stroke="#4e4e4e" stroke-width="0.9" stroke-linejoin="round"/>
<path d="M8.6 3.7L12 14.6L4 13.8" fill="none" stroke="#7a7a7a" stroke-width="0.8"/>
<path d="M8.6 5L14.4 16.4L11 12" fill="#dfe6f0"/>
<path d="M12 14.6L20.9 17" stroke="#7a7a7a" stroke-width="0.8"/>
<path d="M8.6 3.7L20.5 17" stroke="#e08644" stroke-width="1.1"/>
<path d="M6 14.6C8 15.6 10.6 15.6 12.6 14.8" fill="none" stroke="#4a7ad0" stroke-width="0.8"/></svg>
<svg class="abs" style="left:1051.3px;top:435.5px;" width="24" height="24" viewBox="0 0 24 24"><path d="M3.4 11.2C5.4 13.6 9 14 9.8 14V21.1H3.4Z" fill="#f03a1a"/>
<path d="M9.8 14C11.6 14.4 14 14.4 15.8 14V21.1H9.8Z" fill="#12b064"/>
<path d="M15.8 14C17.8 13.6 20.4 12.4 21.7 10.4V21.1H15.8Z" fill="#1030d8"/>
<path d="M3.6 10.4C6.4 1.2 18.8 1.2 21.6 10.4C18.4 15.4 6.8 15.4 3.6 10.4Z" fill="#fdfdfd" stroke="#0c0c0c" stroke-width="1.3"/>
<circle cx="12.6" cy="7.4" r="3.8" fill="#0a0a0a"/></svg>
<!-- END TOOLBAR PANEL -->
<!-- LOGO -->
<svg class="abs" style="left:28px;top:790px;" width="46" height="50" viewBox="28 790 46 50">
 <g fill="#f0421f">
  <path d="M52.5 795.6L58.2 801.6H55.6V834.4H49.7V801.6H46.9Z"/>
  <path d="M55.5 812.4L67.9 805.2V825.4L50.1 836.1L49.7 830.8L55.5 830Z"/>
  <path d="M32 822.1L49.9 830.8L50.2 836.1L32 825.8Z"/>
  <path d="M37.4 815.1L49.9 821.3V825.5L37.4 819.2Z"/>
  <path d="M40.3 807.3L49.9 812.6V817.2L40.3 811.4Z"/>
 </g>
 <path d="M55.4 818.6L62.9 814.7V822.9L55.4 827Z" fill="#cbcbc9"/>
 <path d="M32.3 823V804.9L50.1 794.7L67.7 804.9" fill="none" stroke="#d04a20" stroke-width="1.1"/>
</svg>
<div class="abs" style="left:69.8px;top:797.2px;font-family:'Liberation Sans',sans-serif;font-weight:bold;font-size:22.8px;line-height:26px;color:#56595d;-webkit-text-stroke:0.7px #56595d;transform:scaleX(0.815);transform-origin:0 0;white-space:nowrap;letter-spacing:-0.3px;">SketchUp</div>
<div class="abs" style="left:154px;top:795.3px;font-family:'Liberation Sans','Noto Sans CJK SC',sans-serif;font-weight:bold;font-size:28px;line-height:32px;color:#f0421f;-webkit-text-stroke:0.8px #f0421f;white-space:nowrap;transform:scale(1.1,1.17) skewY(-6deg);transform-origin:0 0;">吧</div>
<div class="abs" style="left:71px;top:824.8px;font-family:'Liberation Sans',sans-serif;font-weight:bold;font-size:10.2px;line-height:12px;color:#55585c;white-space:nowrap;letter-spacing:0.1px;">www.sketchupbar.com</div>
<!-- CURSORS -->
<svg class="abs" style="left:598px;top:18px;" width="24" height="26" viewBox="598 18 24 26">
 <path d="M606.2 32.8V24C606.2 21.6 609.8 21.6 609.8 24V28C610.4 27 612.2 27.2 612.4 28.6C613 27.8 614.6 28 614.8 29.6C615.6 29 616.6 29.6 616.4 31V35C616.4 37.5 615 39.8 613 39.8H607.6C605.6 38.6 604.4 35.4 602.6 32.6C602 31 603.6 30 604.6 31.2Z" fill="#fdfdfd" stroke="#1c2a24" stroke-width="1.1" stroke-linejoin="round"/>
 <path d="M609.8 28V31.5M612.4 28.8V31.8M614.8 30V32.4" stroke="#9aa8a0" stroke-width="0.7"/>
</svg>
<svg class="abs" style="left:996px;top:716px;" width="22" height="28" viewBox="996 716 22 28">
 <path d="M1001.2 720.1V736.8L1005.2 733L1007.8 738.6L1010.6 737.4L1008.2 732.2L1012.8 731.8Z" fill="#fdfcfc" stroke="#1a222a" stroke-width="1.15" stroke-linejoin="round"/>
</svg>
</body></html>
